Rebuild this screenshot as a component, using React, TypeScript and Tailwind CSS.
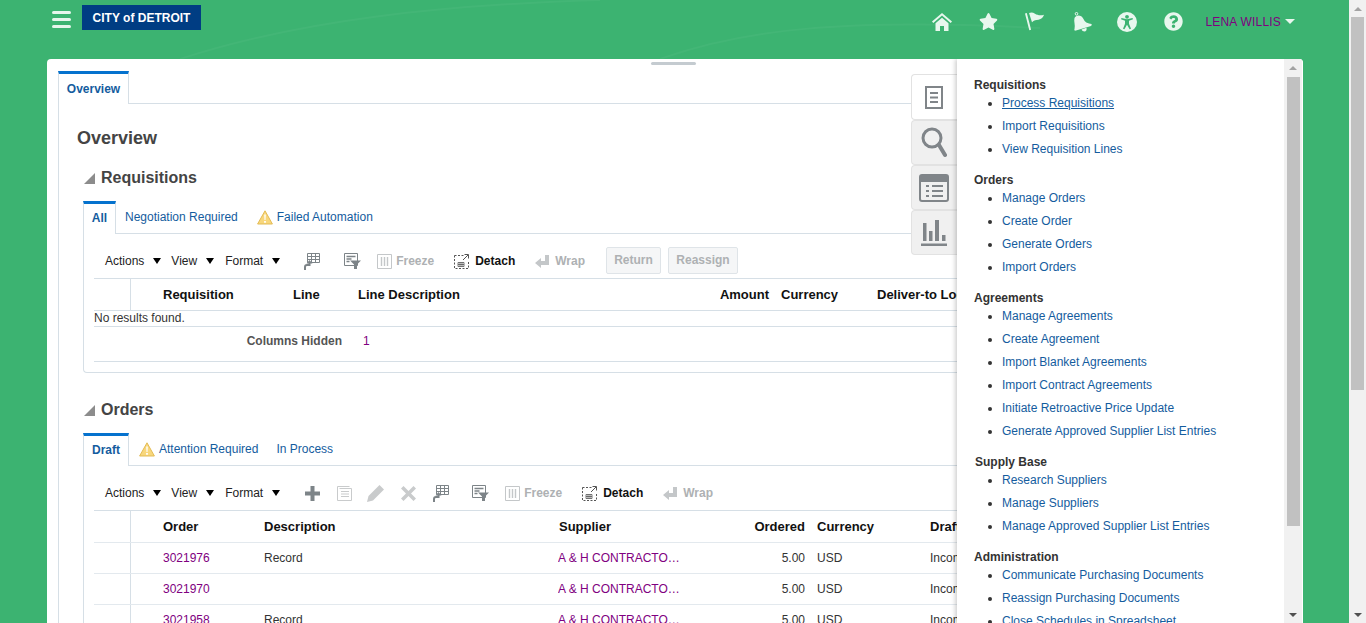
import type { ReactNode } from 'react'
import { FaQuestionCircle, FaStar } from 'react-icons/fa'

const linkColor = 'text-[#145c9e]'

function Caret() {
  return <span className="ml-[9px] inline-block w-0 h-0 border-x-[4.5px] border-x-transparent border-t-[6px] border-t-black" />
}

function Menu({ label, ml }: { label: string; ml: string }) {
  return (
    <div className={`flex items-center text-[#222] ${ml}`}>
      {label}
      <Caret />
    </div>
  )
}

function ColumnsIcon({ ml }: { ml: string }) {
  return (
    <svg className={ml} width="17" height="17" viewBox="0 0 17 17" fill="none" stroke="#7d8488" strokeWidth="1">
      <path d="M4.500 .5h12v9h-12zM4.500 3.500h12M4.500 6.500h12M8.500 .5v9M12.500 .5v9" />
      <path d="M6.500 10v2H4c-1 0-2 .8-2 2v3" strokeWidth="2" />
      <path d="M3.500 10.500l3-3.500 3 3.500z" fill="#7d8488" stroke="none" />
    </svg>
  )
}

function FilterIcon({ ml }: { ml: string }) {
  return (
    <svg className={ml} width="17" height="16" viewBox="0 0 17 16" fill="none" stroke="#7d8488">
      <path d="M.5 .5h13v12H.5z" />
      <path d="M2.500 3.500h9M2.500 6h5M2.500 8.500h3" strokeWidth="1.300" />
      <path d="M6 7.500h11l-4 4V16h-3v-4.500z" fill="#7d8488" stroke="none" />
    </svg>
  )
}

function FreezeIcon() {
  return (
    <svg width="15" height="15" viewBox="0 0 15 15" fill="none" stroke="#c4c7c9">
      <path d="M.5 .5h14v14H.5z" />
      <path d="M4.500 3v9M7.500 3v9M10.500 3v9" strokeWidth="1.400" />
    </svg>
  )
}

function DetachIcon() {
  return (
    <svg width="16" height="16" viewBox="0 0 16 16" fill="none" stroke="#555">
      <path d="M.5 2.500h9M.5 2.500v13h14v-8" strokeDasharray="2 1.500" />
      <path d="M9 7l5-5M10.500 1.500h4v4" />
      <path d="M4 9.500h6v4H4zM4 11.500h6M6 9.500v4M8 9.500v4" strokeWidth="0.8" />
    </svg>
  )
}

function WrapIcon() {
  return (
    <svg width="14" height="13" viewBox="0 0 14 13" fill="#c4c7c9">
      <path d="M10 0h4v10H6v3L0 8l6-5v3h4z" />
    </svg>
  )
}

function WarnIcon() {
  return (
    <svg width="16" height="15" viewBox="0 0 16 15">
      <path d="M8 .8L15.400 14H.6z" fill="#f8d77c" stroke="#e3bb55" strokeWidth="1" strokeLinejoin="round" />
      <path d="M7.200 4.500h1.600l-.3 5.500h-1zM7.100 11h1.800v1.800H7.100z" fill="#fff" />
    </svg>
  )
}

function TabRow({ children }: { children: ReactNode }) {
  return <div className="flex h-[33px] border-b border-[#d6dfe6] text-[12px]">{children}</div>
}

function ActiveSubTab({ label, w }: { label: string; w: string }) {
  return (
    <div className={`${w} h-[33px] pb-[2px] bg-white border-x border-x-[#d6dfe6] border-t-[3px] border-t-[#0572ce] flex items-center justify-center font-bold text-[#145c9e]`}>
      {label}
    </div>
  )
}

function ToolbarTail() {
  return (
    <>
      <div className="ml-[16px] flex items-center gap-[4px] font-bold text-[#aeb1b3]">
        <FreezeIcon />
        Freeze
      </div>
      <div className="ml-[20px] flex items-center gap-[5px] font-bold text-[#111]">
        <DetachIcon />
        Detach
      </div>
      <div className="ml-[20px] flex items-center gap-[6px] font-bold text-[#aeb1b3]">
        <WrapIcon />
        Wrap
      </div>
    </>
  )
}

function ToolbarMenus() {
  return (
    <>
      <Menu label="Actions" ml="" />
      <Menu label="View" ml="ml-[10px]" />
      <Menu label="Format" ml="ml-[11px]" />
    </>
  )
}

function ReqHeader() {
  return (
    <div className="flex h-[32px] items-center border-t border-[#d6dfe6] font-bold text-[#111] whitespace-nowrap text-[13px]">
      <div className="w-[37px] h-full border-r border-[#d6dfe6]" />
      <div className="w-[32px]" />
      <div className="w-[130px]">Requisition</div>
      <div className="w-[65px]">Line</div>
      <div className="w-[300px]">Line Description</div>
      <div className="w-[111px] text-right">Amount</div>
      <div className="w-[12px]" />
      <div className="w-[96px]">Currency</div>
      <div>Deliver-to Location</div>
    </div>
  )
}

function OrderCells({ order, desc, draft }: { order: string; desc: string; draft: string }) {
  return (
    <div className="flex h-[31px] items-center border-t border-[#e3e9ee] whitespace-nowrap text-[#333]">
      <div className="w-[37px] h-full border-r border-[#d6dfe6]" />
      <div className="w-[32px]" />
      <div className="w-[101px] text-[#800080]">{order}</div>
      <div className="w-[294px]">{desc}</div>
      <div className="w-[124px] overflow-hidden text-ellipsis text-[#800080]">A &amp; H CONTRACTORS</div>
      <div className="w-[123px] text-right">5.00</div>
      <div className="w-[12px]" />
      <div className="w-[113px]">USD</div>
      <div>{draft}</div>
    </div>
  )
}

const drawerGroups: { title: string; links: string[]; pl?: string }[] = [
  { title: 'Requisitions', links: ['Process Requisitions', 'Import Requisitions', 'View Requisition Lines'] },
  { title: 'Orders', links: ['Manage Orders', 'Create Order', 'Generate Orders', 'Import Orders'] },
  {
    title: 'Agreements',
    links: [
      'Manage Agreements',
      'Create Agreement',
      'Import Blanket Agreements',
      'Import Contract Agreements',
      'Initiate Retroactive Price Update',
      'Generate Approved Supplier List Entries',
    ],
  },
  { title: 'Supply Base', pl: 'pl-px', links: ['Research Suppliers', 'Manage Suppliers', 'Manage Approved Supplier List Entries'] },
  {
    title: 'Administration',
    links: ['Communicate Purchasing Documents', 'Reassign Purchasing Documents', 'Close Schedules in Spreadsheet'],
  },
]

function Scrollbar({ track, thumb, head }: { track: string; thumb: string; head: string }) {
  return (
    <div className={`${track} shrink-0 bg-[#f1f1f1] flex flex-col items-center`}>
      <div className={`${head} w-full flex items-center justify-center shrink-0`}>
        <span className="w-0 h-0 border-x-[4px] border-x-transparent border-b-[4px] border-b-[#a3a3a3]" />
      </div>
      <div className={`${thumb} w-[13px] bg-[#c1c1c1] shrink-0`} />
      <div className="flex-1" />
      <div className="h-[17px] w-full flex items-center justify-center shrink-0">
        <span className="w-0 h-0 border-x-[4px] border-x-transparent border-t-[4px] border-t-[#505050]" />
      </div>
    </div>
  )
}

function SideTab({ children, active, h }: { children: ReactNode; active?: boolean; h: string }) {
  return (
    <div
      className={`${h} w-[46px] pr-[2px] flex items-center justify-center rounded-l-[4px] border border-r-0 border-[#e2e2e2] ${
        active ? 'bg-white' : 'bg-[#f0f0f0]'
      }`}
    >
      {children}
    </div>
  )
}

export default function App() {
  return (
    <div className="relative w-[1366px] h-[623px] overflow-hidden flex bg-[#3cb371] text-[12px] font-['Liberation_Sans',Arial,sans-serif]">
      <div className="w-[1349px] flex flex-col">
        {/* top bar */}
        <div className="h-[59px] shrink-0 flex items-start relative">
          <svg className="absolute left-[180px] top-0" width="900" height="59" viewBox="0 0 900 59" fill="none" stroke="#fff" strokeOpacity="0.04" strokeWidth="2">
            <path d="M0 59C120 20 260 5 420 0M480 59C560 30 660 18 860 28" />
          </svg>
          <div className="ml-[52px] mt-[11px] w-[19px] flex flex-col gap-[4px]">
            <div className="h-[3px] rounded-full bg-[#e6f6ec]" />
            <div className="h-[3px] rounded-full bg-[#e6f6ec]" />
            <div className="h-[3px] rounded-full bg-[#e6f6ec]" />
          </div>
          <div className="ml-[11px] mt-[5px] w-[119px] h-[25px] bg-[#003d83] flex items-center justify-center font-bold text-white">
            CITY of DETROIT
          </div>
          <div className="ml-auto mr-[54px] mt-[12px] h-[19px] flex items-center text-[#e8f7ee]">
            <svg width="20" height="18" viewBox="0 0 20 18" fill="currentColor">
              <path d="M10 0L0 8.500l1.300 1.400L10 2.600l8.700 7.300L20 8.500z" />
              <path d="M3.500 10.200L10 4.800l6.500 5.400V18H12v-5H8v5H3.500z" />
            </svg>
            <FaStar className="ml-[27px]" size={19} />
            <svg className="ml-[27px]" width="20" height="19" viewBox="0 0 20 19" fill="currentColor">
              <path d="M0 1.500L1.800 1l4.300 16.800-1.800.5z" />
              <path d="M4 1c2.500-1 4-.5 6 .8 2.500 1.500 5.500 2 9 1-.8 2.500-2.500 4.500-5.500 5-2.500.5-4.500 0-6.500 2.500z" />
            </svg>
            <svg className="ml-[27px]" width="20" height="20" viewBox="0 0 20 20" fill="currentColor">
              <circle cx="4.500" cy="1.800" r="1.300" fill="none" stroke="currentColor" />
              <path d="M2.500 6C4 2.500 9.500 2.500 11.500 7c1.500 3.500 4.500 4.500 8 5 .5 1 0 1.500-.5 2L4 18.500c-1.500.5-2-.5-1.500-1.500 1-4-1-7.500 0-11z" />
              <path d="M9.500 17.500l5-1.800c.5 2-.5 3.800-2 3.800s-2.500-1-3-2z" />
            </svg>
            <svg className="ml-[25px]" width="20" height="20" viewBox="0 0 20 20">
              <circle cx="10" cy="10" r="10" fill="currentColor" />
              <circle cx="10" cy="4.800" r="1.900" fill="#3cb371" />
              <path d="M4 7.200l.5-1.200L10 7.300 15.500 6l.5 1.200-4 1.500v3l2 5-1.400.6L10 12.800l-2.600 4.500-1.400-.6 2-5v-3z" fill="#3cb371" />
            </svg>
            <FaQuestionCircle className="ml-[27px]" size={19} />
            <span className="ml-[22px] text-[#800080] tracking-[0.2px]">LENA WILLIS</span>
            <span className="ml-[4px] w-0 h-0 border-x-[5px] border-x-transparent border-t-[5px] border-t-[#e8f7ee]" />
          </div>
        </div>

        {/* main panel */}
        <div className="relative ml-[47px] w-[1256px] flex-1 min-h-0 bg-white rounded-t-[4px] flex overflow-hidden">
          <div className="absolute left-[604px] top-[3px] w-[45px] h-[3px] rounded-sm bg-[#c4cbd0]" />

          <div className="w-[910px] shrink-0 overflow-hidden pl-[11px] pt-[12px]">
            <div className="flex h-[33px] w-[900px] border-b border-[#d6dfe6]">
              <div className="w-[71px] h-[33px] bg-white border-x border-x-[#d6dfe6] border-t-[3px] border-t-[#0572ce] flex items-center justify-center font-bold text-[#145c9e]">
                Overview
              </div>
            </div>
            <div className="w-[1100px] border-l border-[#d6dfe6] pl-[18px]">
              <div className="h-[54px] pt-[24px] text-[18px] leading-[21px] font-bold text-[#444]">Overview</div>

              <div className="h-[38px] pt-[2px] flex items-center pl-[7px] text-[16px] font-bold text-[#444]">
                <span className="w-0 h-0 border-l-[11px] border-l-transparent border-b-[11px] border-b-[#8c8c8c]" />
                <span className="ml-[6px]">Requisitions</span>
              </div>

              <div className="ml-[6px] mt-[5px]">
                <TabRow>
                  <ActiveSubTab label="All" w="w-[33px]" />
                  <div className={`ml-[9px] flex items-center ${linkColor}`}>Negotiation Required</div>
                  <div className={`ml-[19px] flex items-center gap-[4px] ${linkColor}`}>
                    <WarnIcon />
                    Failed Automation
                  </div>
                </TabRow>
                <div className="border-l border-b border-[#d6dfe6] rounded-bl-[4px] pl-[10px] h-[139px]">
                  <div className="h-[44px] pt-[10px] pl-[11px] flex items-center whitespace-nowrap">
                    <ToolbarMenus />
                    <ColumnsIcon ml="ml-[23px]" />
                    <FilterIcon ml="ml-[24px]" />
                    <ToolbarTail />
                    <div className="ml-[21px] -mt-[2px] w-[55px] h-[27px] rounded-[2px] border border-[#dfe4e8] bg-[#f5f6f7] flex items-center justify-center font-bold text-[#aeb1b3]">Return</div>
                    <div className="ml-[7px] -mt-[2px] w-[70px] h-[27px] rounded-[2px] border border-[#dfe4e8] bg-[#f5f6f7] flex items-center justify-center font-bold text-[#aeb1b3]">Reassign</div>
                  </div>
                  <ReqHeader />
                  <div className="h-[16px] border-t border-[#d6dfe6] leading-[15px] text-[#333]">No results found.</div>
                  <div className="h-[35px] pb-[6px] border-t border-[#d6dfe6] flex items-center">
                    <div className="w-[248px] text-right font-bold text-[#555]">Columns Hidden</div>
                    <div className="ml-[21px] text-[#800080]">1</div>
                  </div>
                  <div className="border-t border-[#d6dfe6]" />
                </div>
              </div>

              <div className="mt-[17px] h-[38px] pt-[2px] flex items-center pl-[7px] text-[16px] font-bold text-[#444]">
                <span className="w-0 h-0 border-l-[11px] border-l-transparent border-b-[11px] border-b-[#8c8c8c]" />
                <span className="ml-[6px]">Orders</span>
              </div>

              <div className="ml-[6px] mt-[5px]">
                <TabRow>
                  <ActiveSubTab label="Draft" w="w-[46px]" />
                  <div className={`ml-[10px] flex items-center gap-[4px] ${linkColor}`}>
                    <WarnIcon />
                    Attention Required
                  </div>
                  <div className={`ml-[18px] flex items-center ${linkColor}`}>In Process</div>
                </TabRow>
                <div className="border-l border-[#d6dfe6] pl-[10px]">
                  <div className="h-[44px] pt-[10px] pl-[11px] flex items-center whitespace-nowrap">
                    <ToolbarMenus />
                    <svg className="ml-[25px]" width="15" height="15" viewBox="0 0 15 15" fill="#7d8488">
                      <path d="M5.500 0h4v5.500H15v4H9.500V15h-4V9.500H0v-4h5.500z" />
                    </svg>
                    <svg className="ml-[17px]" width="15" height="16" viewBox="0 0 15 16" fill="none" stroke="#c9cbcc">
                      <path d="M.5 1.500h12M.5 1.500v14h14v-12h-12" />
                      <path d="M4 6.500h8M4 9h8M4 11.500h8" />
                    </svg>
                    <svg className="ml-[15px]" width="17" height="17" viewBox="0 0 17 17" fill="#c9cbcc">
                      <path d="M12.500 0L17 4.500 6 15.500 0 17l1.500-6z" />
                    </svg>
                    <svg className="ml-[17px]" width="15" height="15" viewBox="0 0 15 15" fill="#c9cbcc">
                      <path d="M2.500 0L7.500 5l5-5L15 2.500l-5 5 5 5-2.500 2.500-5-5-5 5L0 12.500l5-5-5-5z" />
                    </svg>
                    <ColumnsIcon ml="ml-[16px]" />
                    <FilterIcon ml="ml-[23px]" />
                    <ToolbarTail />
                  </div>
                  <div className="flex h-[32px] items-center border-t border-[#d6dfe6] font-bold text-[#111] whitespace-nowrap text-[13px]">
                    <div className="w-[37px] h-full border-r border-[#d6dfe6]" />
                    <div className="w-[32px]" />
                    <div className="w-[101px]">Order</div>
                    <div className="w-[295px]">Description</div>
                    <div className="w-[122px]">Supplier</div>
                    <div className="w-[124px] text-right">Ordered</div>
                    <div className="w-[12px]" />
                    <div className="w-[113px]">Currency</div>
                    <div>Draft Status</div>
                  </div>
                  <OrderCells order="3021976" desc="Record" draft="Incomplete" />
                  <OrderCells order="3021970" desc="" draft="Incomplete" />
                  <OrderCells order="3021958" desc="Record" draft="Incomplete" />
                </div>
              </div>
            </div>
          </div>

          {/* side tabs over the table */}
          <div className="absolute left-[864px] top-[15px] flex flex-col z-10">
            <SideTab active h="h-[46px]">
              <svg width="18" height="23" viewBox="0 0 18 23" fill="none" stroke="#808589" strokeWidth="2">
                <path d="M1 1h16v21H1zM5 7h8M5 11.500h8M5 16h8" />
              </svg>
            </SideTab>
            <SideTab h="h-[45px]">
              <svg width="26" height="32" viewBox="0 0 26 32" fill="none" stroke="#808589">
                <circle cx="11" cy="11" r="9" strokeWidth="3" />
                <path d="M18 18l6 10" strokeWidth="4" strokeLinecap="round" />
              </svg>
            </SideTab>
            <SideTab h="h-[45px]">
              <svg width="30" height="28" viewBox="0 0 30 28" fill="none" stroke="#808589" strokeWidth="2">
                <path d="M1 3a2 2 0 0 1 2-2h24a2 2 0 0 1 2 2v4H1z" fill="#808589" />
                <path d="M1 6v19a2 2 0 0 0 2 2h24a2 2 0 0 0 2-2V6" />
                <path d="M7 12h3M13 12h11M7 17h3M13 17h11M7 22h3M13 22h11" />
              </svg>
            </SideTab>
            <SideTab h="h-[45px]">
              <svg width="26" height="26" viewBox="0 0 26 26" fill="#808589">
                <path d="M2 3h3.500v18H2zM8 11h3.500v10H8zM14 0h4v21h-4zM21 15h3.500v6H21zM0 23.500h26V26H0z" />
              </svg>
            </SideTab>
          </div>

          {/* right drawer */}
          <div className="w-[346px] shrink-0 flex relative z-20 bg-white shadow-[-2px_0_4px_rgba(0,0,0,0.18)]">
            <div className="flex-1 min-w-0 overflow-hidden pt-[17px] pl-[17px]">
              {drawerGroups.map((g) => (
                <div key={g.title} className="mb-[13px]">
                  <div className={`h-[18px] leading-[18px] font-bold text-[#333] ${g.pl ?? ''}`}>{g.title}</div>
                  <ul className="list-disc pl-[28px] text-[#333]">
                    {g.links.map((l, i) => (
                      <li key={l} className="h-[18px] leading-[18px] mb-[5px] whitespace-nowrap">
                        <span className={`${linkColor} ${g.title === 'Requisitions' && i === 0 ? 'underline' : ''}`}>{l}</span>
                      </li>
                    ))}
                  </ul>
                </div>
              ))}
            </div>
            <Scrollbar track="w-[18px] mr-px" thumb="h-[449px]" head="h-[18px]" />
          </div>
        </div>
      </div>
      <Scrollbar track="w-[17px]" thumb="h-[373px]" head="h-[17px]" />
    </div>
  )
}
